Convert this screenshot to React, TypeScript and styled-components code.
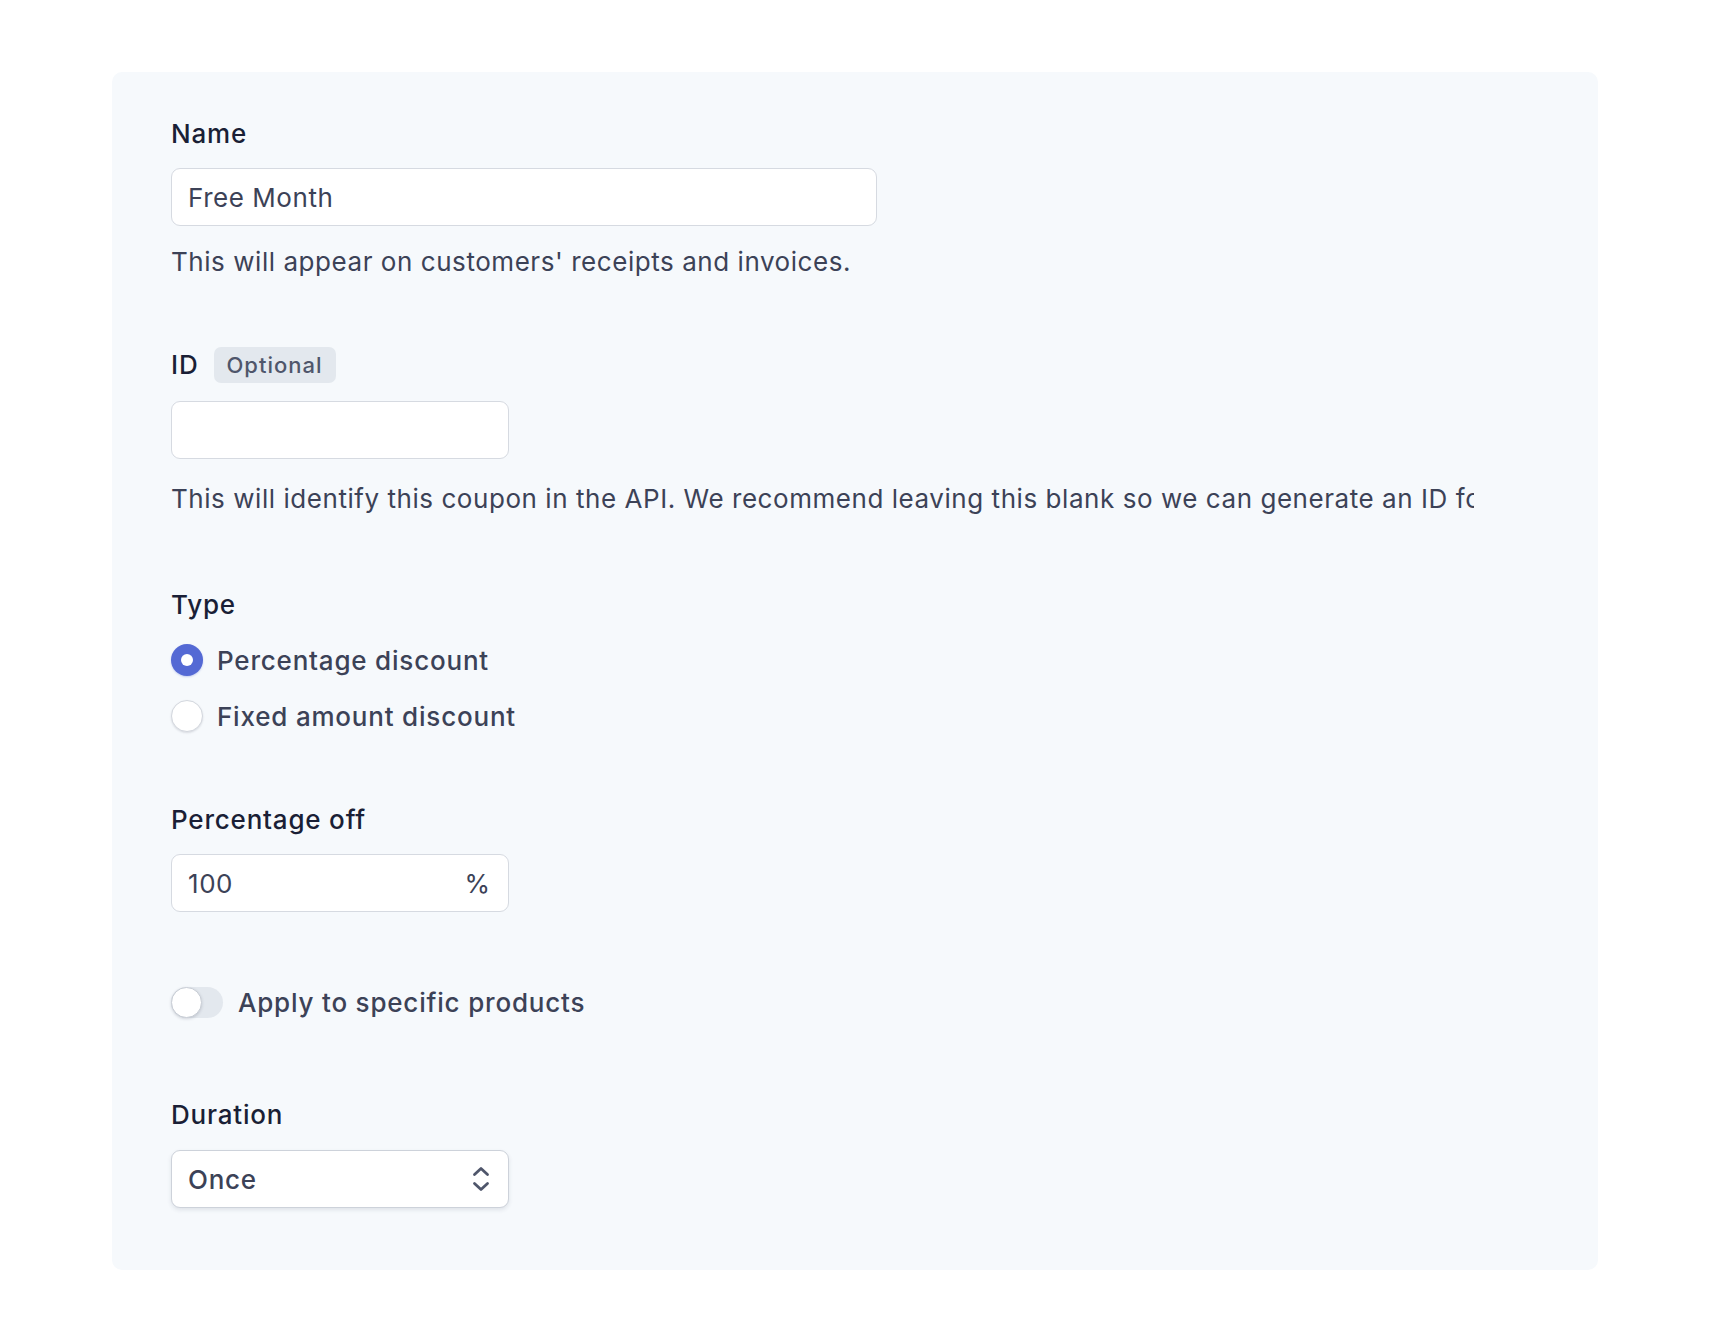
import React from "react";
import styled, { createGlobalStyle } from "styled-components";

const GlobalStyle = createGlobalStyle`
  html, body {
    margin: 0;
    padding: 0;
    background: #ffffff;
    font-family: Inter, "Noto Sans", "Liberation Sans", sans-serif;
    -webkit-font-smoothing: antialiased;
  }
`;

const Page = styled.div`
  padding: 72px 112px 71px;
`;

const Panel = styled.form`
  background: #f6f9fc;
  border-radius: 10px;
  padding: 46px 59px 62px;
  display: flex;
  flex-direction: column;
`;

const Field = styled.div<{ $top?: number }>`
  display: flex;
  flex-direction: column;
  align-items: flex-start;
  margin-top: ${(p) => p.$top ?? 0}px;
`;

const LabelRow = styled.div`
  display: flex;
  align-items: center;
  gap: 16px;
  height: 36px;
`;

const Label = styled.label`
  font-size: 26px;
  line-height: 32px;
  font-weight: 500;
  letter-spacing: 0.8px;
  color: #1a1f36;
`;

const Badge = styled.span`
  display: inline-flex;
  align-items: center;
  height: 36px;
  padding: 0 13px 0 12px;
  border-radius: 7px;
  background: #e3e8ee;
  color: #4f566b;
  font-size: 22px;
  font-weight: 500;
  letter-spacing: 1px;
`;

const InputBox = styled.div<{ $width: number; $top?: number; $shadow?: boolean }>`
  box-sizing: border-box;
  width: ${(p) => p.$width}px;
  height: 58px;
  margin-top: ${(p) => p.$top ?? 18}px;
  display: flex;
  align-items: center;
  padding: 0 18px 0 16px;
  background: #ffffff;
  border: 1.5px solid ${(p) => (p.$shadow ? "#cdd2da" : "#d6dae1")};
  border-radius: 9px;
  box-shadow: ${(p) =>
    p.$shadow ? "0 2px 4px rgba(60, 66, 87, 0.12)" : "none"};
`;

const TextInput = styled.input`
  flex: 1;
  min-width: 0;
  border: none;
  outline: none;
  background: transparent;
  padding: 0;
  font-family: inherit;
  font-size: 26px;
  letter-spacing: 0.55px;
  color: #3c4257;
`;

const Suffix = styled.span`
  font-size: 26px;
  color: #3c4257;
`;

const SelectValue = styled.span`
  flex: 1;
  font-size: 26px;
  font-weight: 500;
  letter-spacing: 0.7px;
  color: #3c4257;
`;

const Help = styled.p<{ $top: number }>`
  margin: ${(p) => p.$top}px 0 0;
  max-width: 1303px;
  white-space: nowrap;
  overflow: hidden;
  font-size: 26px;
  line-height: 32px;
  letter-spacing: 0.55px;
  color: #3c4257;
`;

const RadioList = styled.div`
  display: flex;
  flex-direction: column;
  gap: 24px;
  margin-top: 23px;
`;

const OptionRow = styled.label<{ $gap: number }>`
  display: flex;
  align-items: center;
  gap: ${(p) => p.$gap}px;
  height: 32px;
  font-size: 26px;
  font-weight: 500;
  letter-spacing: 0.8px;
  color: #3c4257;
`;

const RadioDot = styled.span<{ $checked?: boolean }>`
  box-sizing: border-box;
  width: 32px;
  height: 32px;
  border-radius: 50%;
  flex-shrink: 0;
  display: flex;
  align-items: center;
  justify-content: center;
  background: ${(p) => (p.$checked ? "#5469d4" : "#ffffff")};
  border: ${(p) => (p.$checked ? "none" : "1.5px solid #d3d7de")};
  box-shadow: ${(p) =>
    p.$checked
      ? "0 1px 2px rgba(84, 105, 212, 0.3)"
      : "0 1px 2px rgba(60, 66, 87, 0.16)"};

  &::after {
    content: "";
    display: ${(p) => (p.$checked ? "block" : "none")};
    width: 12px;
    height: 12px;
    border-radius: 50%;
    background: #ffffff;
  }
`;

const ToggleTrack = styled.span`
  position: relative;
  width: 52px;
  height: 31px;
  border-radius: 16px;
  background: #e3e8ee;
  flex-shrink: 0;
`;

const ToggleKnob = styled.span`
  position: absolute;
  left: 0;
  top: 0;
  box-sizing: border-box;
  width: 31px;
  height: 31px;
  border-radius: 50%;
  background: #ffffff;
  border: 1.5px solid #c9ced6;
  box-shadow: 0 1px 3px rgba(60, 66, 87, 0.2);
`;

const ToggleRow = styled(OptionRow)`
  margin-top: 75px;
  height: 31px;
`;

const Chevrons = () => (
  <svg width="18" height="26" viewBox="0 0 18 26" fill="none">
    <path
      d="M2.5 8.5 L9 2.5 L15.5 8.5"
      stroke="#4f566b"
      strokeWidth="2.8"
      strokeLinecap="round"
      strokeLinejoin="round"
    />
    <path
      d="M2.5 17.5 L9 23.5 L15.5 17.5"
      stroke="#4f566b"
      strokeWidth="2.8"
      strokeLinecap="round"
      strokeLinejoin="round"
    />
  </svg>
);

export default function App() {
  return (
    <>
      <GlobalStyle />
      <Page>
        <Panel>
          <Field>
            <Label>Name</Label>
            <InputBox $width={706}>
              <TextInput defaultValue="Free Month" />
            </InputBox>
            <Help $top={20}>This will appear on customers' receipts and invoices.</Help>
          </Field>

          <Field $top={69}>
            <LabelRow>
              <Label>ID</Label>
              <Badge>Optional</Badge>
            </LabelRow>
            <InputBox $width={338}>
              <TextInput />
            </InputBox>
            <Help $top={24}>
              This will identify this coupon in the API. We recommend leaving this
              blank so we can generate an ID for you.
            </Help>
          </Field>

          <Field $top={74}>
            <Label>Type</Label>
            <RadioList>
              <OptionRow $gap={14}>
                <RadioDot $checked />
                Percentage discount
              </OptionRow>
              <OptionRow $gap={14}>
                <RadioDot />
                Fixed amount discount
              </OptionRow>
            </RadioList>
          </Field>

          <Field $top={72}>
            <Label>Percentage off</Label>
            <InputBox $width={338}>
              <TextInput defaultValue="100" />
              <Suffix>%</Suffix>
            </InputBox>
          </Field>

          <ToggleRow $gap={15}>
            <ToggleTrack>
              <ToggleKnob />
            </ToggleTrack>
            Apply to specific products
          </ToggleRow>

          <Field $top={81}>
            <Label>Duration</Label>
            <InputBox $width={338} $top={19} $shadow>
              <SelectValue>Once</SelectValue>
              <Chevrons />
            </InputBox>
          </Field>
        </Panel>
      </Page>
    </>
  );
}
